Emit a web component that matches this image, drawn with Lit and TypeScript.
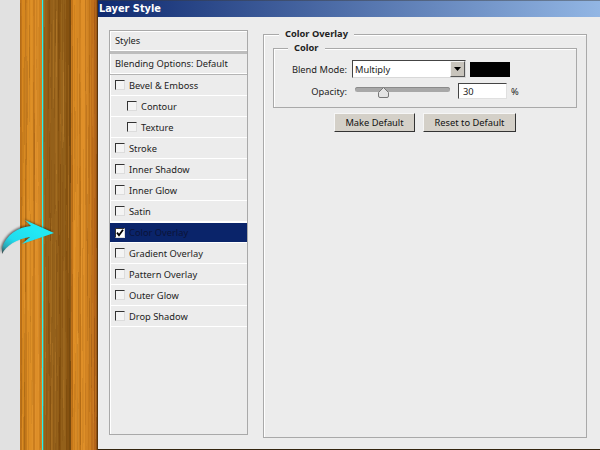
import { LitElement, html, css, svg } from "lit";
import { customElement } from "lit/decorators.js";

const rows: [string, boolean, boolean][] = [
  ["Bevel & Emboss", false, false],
  ["Contour", true, false],
  ["Texture", true, false],
  ["Stroke", false, false],
  ["Inner Shadow", false, false],
  ["Inner Glow", false, false],
  ["Satin", false, false],
  ["Color Overlay", false, true],
  ["Gradient Overlay", false, false],
  ["Pattern Overlay", false, false],
  ["Outer Glow", false, false],
  ["Drop Shadow", false, false],
];

// Broad plank bands: [x, width, colour]
const bands: [number, number, string][] = [
  [0, 2, "#c0741a"], [2, 3, "#d6871f"], [5, 2, "#c67a1b"], [7, 6, "#dc8d24"], [13, 2, "#ca7d1e"],
  [15, 4, "#dd8e28"], [19, 3, "#cf811f"],
  [22, 6, "#96611a"], [28, 3, "#8a5613"], [31, 7, "#94601a"],
  [38, 3, "#885411"], [41, 5, "#93601a"], [46, 3, "#865210"], [49, 2, "#794a0e"],
  [51, 2, "#c27419"], [53, 3, "#dc8b22"], [56, 3, "#d68824"], [59, 2, "#ca7c1b"], [61, 4, "#df8f28"],
  [65, 3, "#d08222"], [68, 3, "#c87a1c"], [71, 3, "#bf6f1a"], [74, 2, "#b4641a"], [76, 1, "#8f5212"], [77, 1, "#5c3208"],
];

// Seeded fine grain streaks
function makeGrain() {
  let s = 20240611;
  const rnd = () => {
    s = (s + 0x6d2b79f5) | 0;
    let t = Math.imul(s ^ (s >>> 15), 1 | s);
    t = (t + Math.imul(t ^ (t >>> 7), 61 | t)) ^ t;
    return ((t ^ (t >>> 14)) >>> 0) / 4294967296;
  };
  const out: { x: number; y: number; h: number; c: string; o: number }[] = [];
  for (let i = 0; i < 320; i++) {
    out.push({
      x: Math.floor(rnd() * 77),
      y: Math.floor(rnd() * 450) - 30,
      h: 40 + Math.floor(rnd() * 140),
      c: rnd() < 0.5 ? "#6b3a06" : "#f2ab45",
      o: 0.06 + rnd() * 0.1,
    });
  }
  return out;
}
const grain = makeGrain();

@customElement("app-root")
export class AppRoot extends LitElement {
  static styles = css`
    :host {
      display: flex;
      width: 600px;
      height: 450px;
      position: relative;
      overflow: hidden;
      background: #e1e1e1;
      font-family: "Noto Sans", "Liberation Sans", sans-serif;
      font-size: 9.3px;
      color: #222;
    }
    .wood { margin-left: 20px; width: 78px; height: 450px; flex: none; display: block; }
    .arrow { position: absolute; left: 0; top: 218px; filter: drop-shadow(-1px -1px 1px rgba(0, 0, 0, 0.55)); }
    .dialog {
      width: 502px;
      height: 450px;
      box-sizing: border-box;
      border-bottom: 1px solid #33240e;
      flex: none;
      background: #ececec;
      display: flex;
      flex-direction: column;
    }
    .title {
      height: 17px;
      flex: none;
      padding-left: 1px;
      line-height: 17px;
      font-family: "DejaVu Sans", sans-serif;
      font-size: 9.8px;
      font-weight: 700;
      color: #fff;
      background: linear-gradient(90deg, #0f2a70, #92b6e4);
      box-shadow: inset 0 1px 0 rgba(60, 60, 60, 0.45);
    }
    .body {
      flex: 1;
      display: flex;
      align-items: flex-start;
      padding: 13px 13px 0 11px;
      gap: 15px;
    }
    .list {
      width: 139px;
      height: 405px;
      box-sizing: border-box;
      border: 1px solid #a9a9a9;
      box-shadow: inset 1px 1px 0 #fff;
      display: flex;
      flex-direction: column;
    }
    .head {
      height: 19px;
      flex: none;
      display: flex;
      align-items: center;
      padding-left: 5px;
      border-bottom: 1px solid #fff;
    }
    .gap { height: 3px; flex: none; background: #bdbdbd; }
    .gap.thin { height: 1px; background: #b4b4b4; }
    .row {
      height: 20px;
      flex: none;
      display: flex;
      align-items: center;
      padding-left: 5px;
      gap: 4px;
      border-bottom: 1px solid #fff;
    }
    .row.sub { padding-left: 17px; }
    .row.on {
      height: 19px;
      background: #0a246a;
      border-top: 1px solid #fff;
      border-bottom-color: #fff;
      background-clip: padding-box;
    }
    .row.on .name { color: #0b1338; }
    .row.on .box { background: #fff; }
    .box {
      width: 8px;
      height: 8px;
      flex: none;
      background: #f4f4f4;
      border: 1px solid #dcdcdc;
      border-top-color: #333;
      border-left-color: #333;
      display: block;
    }
    .box svg { display: block; }
    .panel {
      width: 324px;
      height: 404px;
      margin-top: 4px;
      box-sizing: border-box;
      border: 1px solid #a9a9a9;
      box-shadow: inset 1px 1px 0 #fff;
      position: relative;
      padding: 13px 9px 0 9px;
    }
    .legend {
      position: absolute;
      top: -8px;
      background: #ececec;
      padding: 0 6px;
      line-height: 13px;
      font-weight: 700;
      font-size: 9.3px;
      color: #222;
    }
    .panel > .legend { left: 15px; }
    .group {
      height: 60px;
      box-sizing: border-box;
      border: 1px solid #a9a9a9;
      box-shadow: inset 1px 1px 0 #fff;
      position: relative;
      display: flex;
      flex-direction: column;
      padding: 11px 0 0 0;
      gap: 5px;
    }
    .group > .legend { left: 14px; }
    .line { display: flex; align-items: center; }
    .lab { width: 73px; text-align: right; flex: none; }
    .select {
      margin-left: 5px;
      width: 114px;
      height: 18px;
      box-sizing: border-box;
      border: 1px solid #d8d8d8;
      border-top-color: #444;
      border-left-color: #444;
      background: #fff;
      display: flex;
      align-items: center;
      justify-content: space-between;
      padding-left: 2px;
    }
    .drop {
      width: 15px;
      height: 16px;
      box-sizing: border-box;
      background: #c8c4bc;
      border: 1px solid #f4f4f4;
      border-right-color: #555;
      border-bottom-color: #555;
      display: flex;
      align-items: center;
      justify-content: center;
    }
    .swatch { margin-left: 4px; width: 40px; height: 15px; background: #000; border: 0; }
    .track-wrap { margin-left: 8px; width: 95px; height: 14px; position: relative; flex: none; }
    .track {
      height: 5px;
      margin-top: 3px;
      background: #a8a8a8;
      border-radius: 3px;
      box-shadow: inset 0 1px 0 #8a8a8a;
    }
    .thumb { position: absolute; left: 23px; top: 3px; display: block; }
    .num {
      margin-left: 8px;
      width: 49px;
      height: 16px;
      box-sizing: border-box;
      border: 1px solid #e0e0e0;
      border-top-color: #444;
      border-left-color: #444;
      background: #fff;
      padding-left: 4px;
      line-height: 15px;
    }
    .pct { margin-left: 4px; }
    .btns { display: flex; gap: 8px; margin: 5px 0 0 61px; }
    .btn {
      height: 19px;
      box-sizing: border-box;
      background: #d4d0c8;
      border: 1px solid #f6f6f6;
      border-right-color: #333;
      border-bottom-color: #333;
      display: flex;
      align-items: center;
      justify-content: center;
      color: #111;
    }
    .btn.a { width: 81px; }
    .btn.c { width: 93px; }
  `;

  private box(on: boolean) {
    return html`<span class="box">${on
      ? html`<svg width="8" height="8" viewBox="0 0 8 8"><path d="M1 3.6 L3 6.2 L7 .8" fill="none" stroke="#000" stroke-width="1.8"/></svg>`
      : ""}</span>`;
  }

  render() {
    return html`
      <svg class="wood" width="78" height="450" viewBox="0 0 78 450">
        ${bands.map(([x, w, c]) => svg`<rect x=${x} y="0" width=${w} height="450" fill=${c} />`)}
        ${grain.map(
          (g) => svg`<rect x=${g.x} y=${g.y} width="1" height=${g.h} fill=${g.c} fill-opacity=${g.o} />`
        )}
        <rect x="22" y="0" width="1" height="450" fill="#22f4f4" />
        <rect x="23" y="0" width="1" height="450" fill="#22f4f4" fill-opacity=".25" />
      </svg>
      <div class="dialog">
        <div class="title">Layer Style</div>
        <div class="body">
          <div class="list">
            <div class="head">Styles</div>
            <div class="gap"></div>
            <div class="head">Blending Options: Default</div>
            <div class="gap thin"></div>
            ${rows.map(
              ([name, sub, on]) => html`
                <div class="row ${sub ? "sub" : ""} ${on ? "on" : ""}">
                  ${this.box(on)}<span class="name">${name}</span>
                </div>
              `
            )}
          </div>
          <div class="panel">
            <div class="legend">Color Overlay</div>
            <div class="group">
              <div class="legend">Color</div>
              <div class="line">
                <span class="lab">Blend Mode:</span>
                <div class="select">
                  <span>Multiply</span>
                  <span class="drop"><svg width="7" height="4" viewBox="0 0 7 4"><path d="M0 0H7L3.5 4Z" fill="#000"/></svg></span>
                </div>
                <div class="swatch"></div>
              </div>
              <div class="line">
                <span class="lab">Opacity:</span>
                <div class="track-wrap">
                  <div class="track"></div>
                  <svg class="thumb" width="11" height="11" viewBox="0 0 11 11"><path d="M5.5 .5 L10.5 5.5 V9 Q10.5 10.5 9 10.5 H2 Q.5 10.5 .5 9 V5.5 Z" fill="#e4e4e4" stroke="#777"/></svg>
                </div>
                <div class="num">30</div>
                <span class="pct">%</span>
              </div>
            </div>
            <div class="btns">
              <div class="btn a">Make Default</div>
              <div class="btn c">Reset to Default</div>
            </div>
          </div>
        </div>
      </div>
      <svg class="arrow" width="56" height="40" viewBox="0 0 56 40">
        <defs>
          <linearGradient id="ag" x1="0" y1="1" x2="0.6" y2="0.3">
            <stop offset="0" stop-color="#3c3c3c"/>
            <stop offset=".22" stop-color="#2aa6b4"/>
            <stop offset=".5" stop-color="#20dcee"/>
            <stop offset="1" stop-color="#22e8f4"/>
          </linearGradient>
        </defs>
        <path d="M54 15 L25 2 L31 8 C18 9 6 17 2 30 L2 36 C6 28 16 21 30 19 L22 26 Z" fill="url(#ag)"/>
      </svg>
    `;
  }
}
